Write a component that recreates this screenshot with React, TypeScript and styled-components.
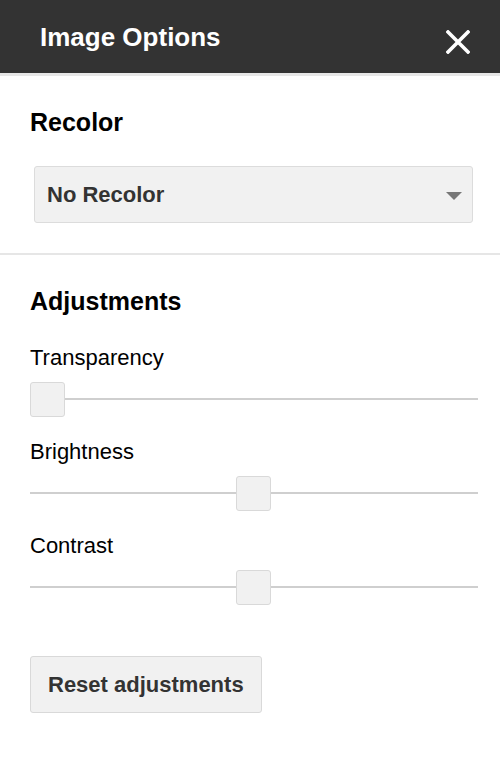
import React from "react";
import styled, { createGlobalStyle } from "styled-components";

const GlobalStyle = createGlobalStyle`
  html, body {
    margin: 0;
    padding: 0;
    background: #ffffff;
  }
  body {
    font-family: "Liberation Sans", Arial, Helvetica, sans-serif;
    color: #000;
  }
  * { box-sizing: border-box; }
`;

const Panel = styled.div`
  width: 500px;
  min-height: 760px;
  background: #fff;
  display: flex;
  flex-direction: column;
`;

const Header = styled.header`
  height: 76px;
  background: #333333;
  border-bottom: 3px solid #e6e6e6;
  display: flex;
  align-items: flex-start;
  justify-content: space-between;
  padding: 22px 30px 0 40px;
`;

const Title = styled.h1`
  margin: 0;
  font-size: 26px;
  line-height: 30px;
  font-weight: 700;
  color: #ffffff;
`;

const CloseButton = styled.button`
  margin-top: 8px;
  width: 24px;
  height: 24px;
  padding: 0;
  border: none;
  background: transparent;
  display: flex;
  cursor: pointer;
`;

const Section = styled.section<{ $divider?: boolean }>`
  display: flex;
  flex-direction: column;
  padding: 31px 22px 0 30px;
  border-bottom: ${(p) => (p.$divider ? "2px solid #e6e6e6" : "none")};
  padding-bottom: ${(p) => (p.$divider ? "30px" : "0")};
`;

const Heading = styled.h2`
  margin: 0;
  font-size: 25px;
  line-height: 30px;
  font-weight: 700;
  color: #000;
`;

const Select = styled.div`
  margin: 29px 5px 0 4px;
  height: 57px;
  background: #f1f1f1;
  border: 1px solid #dcdcdc;
  border-radius: 3px;
  display: flex;
  align-items: center;
  justify-content: space-between;
  padding: 0 10px 0 12px;
  font-size: 22px;
  font-weight: 700;
  color: #333;
`;

const Caret = styled.span`
  width: 0;
  height: 0;
  border-left: 8px solid transparent;
  border-right: 8px solid transparent;
  border-top: 8px solid #777;
  margin-top: 2px;
`;

const Sliders = styled.div`
  display: flex;
  flex-direction: column;
  gap: 22px;
  margin-top: 29px;
`;

const SliderGroup = styled.div`
  display: flex;
  flex-direction: column;
  gap: 11px;
`;

const Label = styled.div`
  font-size: 22px;
  line-height: 26px;
  color: #000;
`;

const Track = styled.div`
  position: relative;
  height: 35px;
  &::before {
    content: "";
    position: absolute;
    left: 0;
    right: 0;
    top: 16px;
    height: 2px;
    background: #cfcfcf;
  }
`;

const Thumb = styled.div`
  position: absolute;
  top: 0;
  width: 35px;
  height: 35px;
  background: #f1f1f1;
  border: 1px solid #d9d9d9;
  border-radius: 3px;
`;

const ResetButton = styled.button`
  align-self: flex-start;
  margin-top: 51px;
  height: 57px;
  padding: 0 17px;
  background: #f1f1f1;
  border: 1px solid #d9d9d9;
  border-radius: 3px;
  font-family: "Liberation Sans", Arial, Helvetica, sans-serif;
  font-size: 22px;
  font-weight: 700;
  color: #333;
  cursor: pointer;
`;

const sliders = [
  { label: "Transparency", value: 0 },
  { label: "Brightness", value: 0.5 },
  { label: "Contrast", value: 0.5 },
];

export default function App() {
  return (
    <Panel>
      <GlobalStyle />
      <Header>
        <Title>Image Options</Title>
        <CloseButton aria-label="Close">
          <svg width="24" height="24" viewBox="0 0 24 24">
            <path d="M2 2 L22 22 M22 2 L2 22" stroke="#fff" strokeWidth="3.6" strokeLinecap="square" />
          </svg>
        </CloseButton>
      </Header>
      <Section $divider>
        <Heading>Recolor</Heading>
        <Select>
          <span>No Recolor</span>
          <Caret />
        </Select>
      </Section>
      <Section>
        <Heading>Adjustments</Heading>
        <Sliders>
          {sliders.map((s) => (
            <SliderGroup key={s.label}>
              <Label>{s.label}</Label>
              <Track>
                <Thumb style={{ left: `calc(${s.value * 100}% - ${s.value * 35 + s.value * 2}px)` }} />
              </Track>
            </SliderGroup>
          ))}
        </Sliders>
        <ResetButton>Reset adjustments</ResetButton>
      </Section>
    </Panel>
  );
}
